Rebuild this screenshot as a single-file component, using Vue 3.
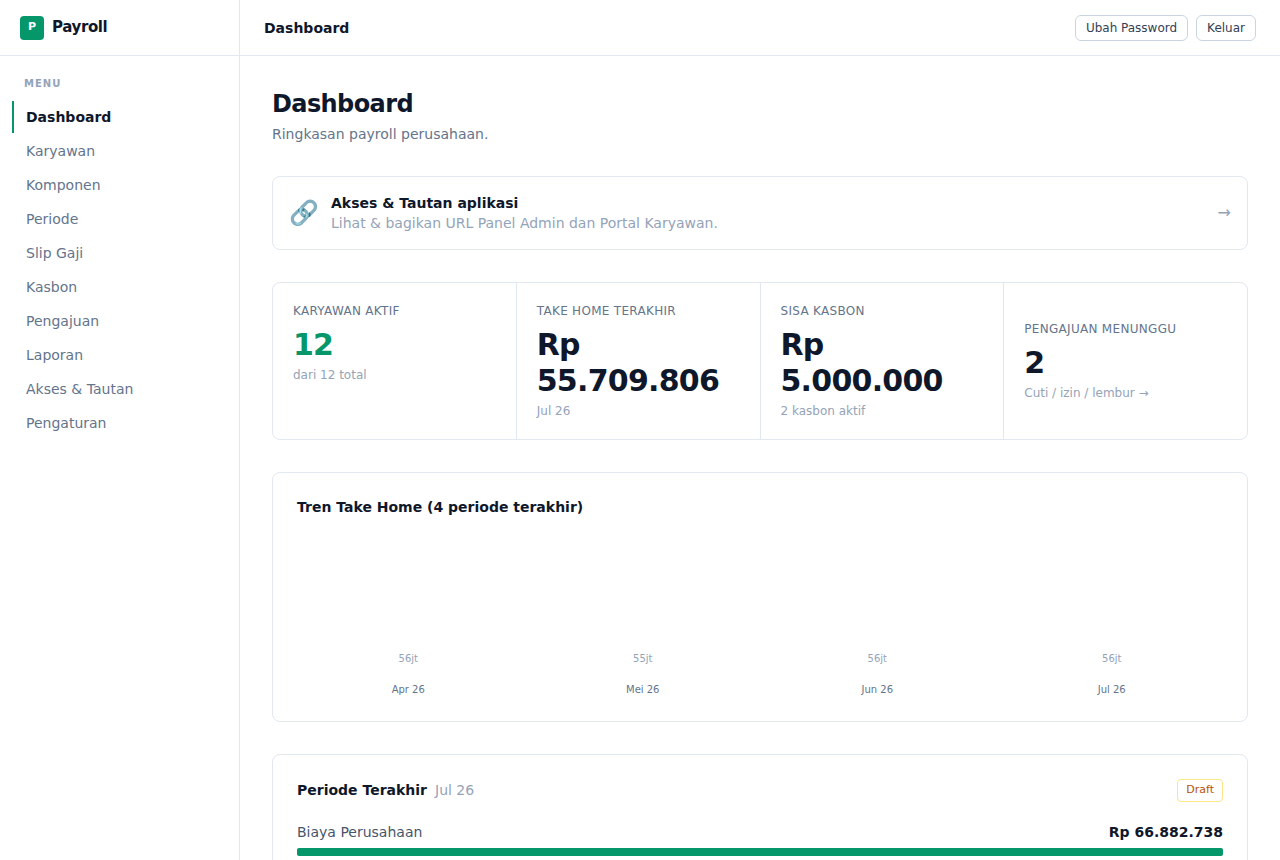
<script setup>
const menu = ['Dashboard', 'Karyawan', 'Komponen', 'Periode', 'Slip Gaji', 'Kasbon', 'Pengajuan', 'Laporan', 'Akses & Tautan', 'Pengaturan']

const stats = [
  { label: 'Karyawan Aktif', value: '12', note: 'dari 12 total', accent: true },
  { label: 'Take Home Terakhir', value: 'Rp 55.709.806', note: 'Jul 26' },
  { label: 'Sisa Kasbon', value: 'Rp 5.000.000', note: '2 kasbon aktif' },
]

const trend = [
  { month: 'Apr 26', total: '56jt' },
  { month: 'Mei 26', total: '55jt' },
  { month: 'Jun 26', total: '56jt' },
  { month: 'Jul 26', total: '56jt' },
]
</script>

<template>
  <div class="layout">
    <aside class="sidebar">
      <div class="brand">
        <span class="logo">P</span>
        <span class="brand-name">Payroll</span>
      </div>
      <nav class="nav" aria-label="Menu">
        <div class="nav-title">MENU</div>
        <a v-for="(item, i) in menu" :key="item" href="#" class="nav-link" :class="{ active: i === 0 }">{{ item }}</a>
      </nav>
    </aside>

    <div class="content">
      <header class="topbar">
        <div class="topbar-title">Dashboard</div>
        <div class="actions">
          <button type="button" class="btn">Ubah Password</button>
          <button type="button" class="btn">Keluar</button>
        </div>
      </header>

      <main class="main">
        <div>
          <h1 class="title">Dashboard</h1>
          <p class="subtitle">Ringkasan payroll perusahaan.</p>
        </div>

        <a href="#" class="card access">
          <span class="link-icon" aria-hidden="true">🔗</span>
          <div class="access-text">
            <div class="heading">Akses &amp; Tautan aplikasi</div>
            <div class="faint">Lihat &amp; bagikan URL Panel Admin dan Portal Karyawan.</div>
          </div>
          <span class="arrow">→</span>
        </a>

        <section class="card stats">
          <div v-for="s in stats" :key="s.label" class="stat">
            <div class="stat-label">{{ s.label }}</div>
            <div class="stat-value" :class="{ accent: s.accent }">{{ s.value }}</div>
            <div class="stat-note">{{ s.note }}</div>
          </div>
          <a href="#" class="stat centered">
            <div class="stat-label">Pengajuan Menunggu</div>
            <div class="stat-value">2</div>
            <div class="stat-note">Cuti / izin / lembur →</div>
          </a>
        </section>

        <section class="card panel">
          <h2 class="heading">Tren Take Home (4 periode terakhir)</h2>
          <div class="chart">
            <div v-for="t in trend" :key="t.month" class="chart-col">
              <span class="chart-total">{{ t.total }}</span>
              <span class="chart-month">{{ t.month }}</span>
            </div>
          </div>
        </section>

        <section class="card panel">
          <div class="row period">
            <div class="period-title">
              <h2 class="heading">Periode Terakhir</h2>
              <span class="faint">Jul 26</span>
            </div>
            <span class="badge">Draft</span>
          </div>
          <div class="row">
            <span class="cost-label">Biaya Perusahaan</span>
            <span class="heading">Rp 66.882.738</span>
          </div>
          <div class="bar"></div>
        </section>
      </main>
    </div>
  </div>
</template>

<style>
body {
  background: #fff;
}
</style>

<style scoped>
.layout {
  display: flex;
  min-height: 100vh;
  font-family: "DejaVu Sans", sans-serif;
  font-size: 14px;
  line-height: 20px;
  color: #0f172a;
}
.layout * {
  box-sizing: border-box;
}
a {
  color: inherit;
  text-decoration: none;
}
h1, h2, p {
  margin: 0;
}
.sidebar {
  position: sticky;
  top: 0;
  flex: none;
  width: 240px;
  height: 100vh;
  border-right: 1px solid #e2e8f0;
}
.brand {
  display: flex;
  gap: 8px;
  height: 56px;
  padding: 16px 20px;
  border-bottom: 1px solid #e2e8f0;
  line-height: 22px;
  font-weight: 700;
}
.logo {
  width: 24px;
  height: 24px;
  border-radius: 4px;
  background: #059669;
  color: #fff;
  font-size: 11px;
  text-align: center;
}
.brand-name {
  font-size: 15px;
  letter-spacing: -0.025em;
}
.nav {
  display: flex;
  flex-direction: column;
  gap: 2px;
  padding: 20px 12px;
}
.nav-title {
  padding: 0 12px 8px;
  font-size: 10px;
  line-height: 15px;
  font-weight: 700;
  letter-spacing: 0.1em;
  color: #94a3b8;
}
.nav-link {
  padding: 6px 12px;
  border-left: 2px solid transparent;
  color: #64748b;
}
.nav-link.active {
  border-left-color: #059669;
  color: #0f172a;
  font-weight: 700;
}
.content {
  flex: 1;
  min-width: 0;
}
.topbar {
  display: flex;
  align-items: center;
  justify-content: space-between;
  height: 56px;
  padding: 0 24px;
  border-bottom: 1px solid #e2e8f0;
}
.topbar-title,
.heading {
  font-size: 14px;
  font-weight: 700;
}
.actions {
  display: flex;
  gap: 8px;
}
.btn {
  padding: 4px 10px;
  border: 1px solid #cbd5e1;
  border-radius: 6px;
  background: #fff;
  color: #334155;
  font-family: inherit;
  font-size: 12px;
  line-height: 16px;
}
.main {
  display: flex;
  flex-direction: column;
  gap: 32px;
  padding: 32px;
}
.title {
  font-size: 24px;
  line-height: 32px;
  font-weight: 700;
  letter-spacing: -0.025em;
}
.subtitle {
  margin-top: 4px;
  color: #64748b;
}
.card {
  border: 1px solid #e2e8f0;
  border-radius: 8px;
}
.access {
  display: flex;
  align-items: center;
  gap: 12px;
  padding: 16px;
}
.link-icon {
  font-size: 24px;
  line-height: 32px;
}
.access-text {
  flex: 1;
}
.faint {
  color: #94a3b8;
}
.arrow {
  font-size: 16px;
  color: #94a3b8;
}
.stats {
  display: grid;
  grid-template-columns: repeat(4, 1fr);
  gap: 1px;
  overflow: hidden;
  background: #e2e8f0;
}
.stat {
  padding: 20px;
  background: #fff;
}
.centered {
  display: flex;
  flex-direction: column;
  justify-content: center;
}
.stat-label {
  font-size: 12px;
  line-height: 16px;
  letter-spacing: 0.025em;
  text-transform: uppercase;
  color: #64748b;
}
.stat-value {
  margin-top: 8px;
  font-size: 30px;
  line-height: 36px;
  font-weight: 700;
  letter-spacing: -0.025em;
}
.accent {
  color: #059669;
}
.stat-note {
  margin-top: 4px;
  font-size: 12px;
  line-height: 16px;
  color: #94a3b8;
}
.panel {
  padding: 24px;
}
.chart {
  display: flex;
  align-items: flex-end;
  gap: 12px;
  height: 160px;
  margin-top: 20px;
}
.chart-col {
  display: flex;
  flex: 1;
  flex-direction: column;
  align-items: center;
  gap: 16px;
  font-size: 10px;
  line-height: 15px;
}
.chart-total {
  color: #94a3b8;
}
.chart-month {
  color: #64748b;
}
.row {
  display: flex;
  align-items: center;
  justify-content: space-between;
}
.period {
  margin-bottom: 20px;
}
.period-title {
  display: flex;
  gap: 8px;
  line-height: 21px;
}
.badge {
  padding: 2px 8px 3px;
  border: 1px solid #fde68a;
  border-radius: 4px;
  color: #b45309;
  font-size: 11px;
  line-height: 16px;
}
.cost-label {
  color: #475569;
}
.bar {
  height: 8px;
  margin-top: 6px;
  border-radius: 2px;
  background: #059669;
}
</style>
